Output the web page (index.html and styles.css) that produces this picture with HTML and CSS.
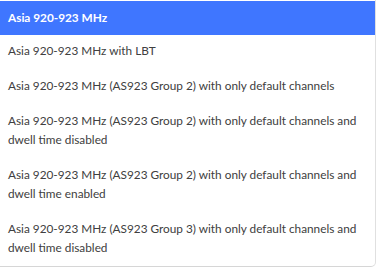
FILE: index.html
```html
<!DOCTYPE html>
<html lang="en">

<head>
    <meta charset="UTF-8">
    <meta name="viewport" content="width=device-width, initial-scale=1.0">
    <title>Frequency plan</title>
    <link rel="stylesheet" href="styles.css">
</head>

<body>
    <ul class="menu">
        <li class="option selected">Asia 920-923 MHz</li>
        <li class="option">Asia 920-923 MHz with LBT</li>
        <li class="option">Asia 920-923 MHz (AS923 Group 2) with only default channels</li>
        <li class="option">Asia 920-923 MHz (AS923 Group 2) with only default channels and dwell time disabled</li>
        <li class="option">Asia 920-923 MHz (AS923 Group 2) with only default channels and dwell time enabled</li>
        <li class="option">Asia 920-923 MHz (AS923 Group 3) with only default channels and dwell time disabled</li>
        <li class="option">Asia 920-923 MHz (AS923 Group 3) with only default channels and dwell time enabled</li>
        <li class="option">Asia 920-923 MHz (AS923 Group 4) with only default channels</li>
        <li class="option">Asia 920-923 MHz (AS923 Group 4) with only default channels and dwell time disabled</li>
    </ul>
</body>

</html>
```

FILE: styles.css
```css
body {
    margin: 0;
    font-family: Lato, "Open Sans", sans-serif;
    background-color: #fff;
}

.menu {
    list-style: none;
    margin: 0;
    padding: 1px 0 0;
    width: 376px;
    height: 267px;
    box-sizing: border-box;
    overflow-y: auto;
    border-bottom: 1px solid #d6d6d6;
    border-right: 1px solid #e0e0e0;
    border-radius: 0 0 5px 0;
}

.menu::-webkit-scrollbar {
    width: 6px;
}

.menu::-webkit-scrollbar-track {
    background: #fff;
}

.menu::-webkit-scrollbar-thumb {
    background: #e6e6e6;
}

.option {
    padding: 6px 8px 10px;
    font-size: 11.8px;
    line-height: 19px;
    color: #404040;
}

.selected {
    padding: 7px 8px 8px;
    background-color: #3f76ff;
    color: #fff;
    font-weight: bold;
}
```
